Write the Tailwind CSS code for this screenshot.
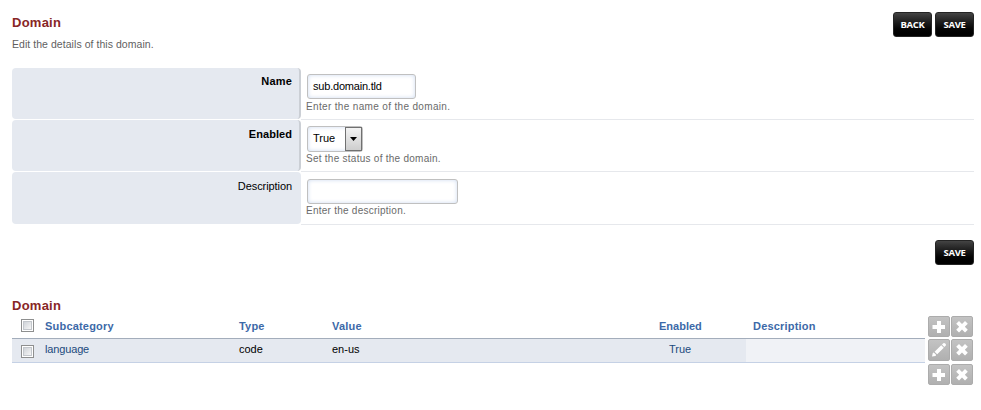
<!DOCTYPE html>
<html lang="en">
<head>
<meta charset="utf-8">
<title>Domain</title>
<script src="https://cdn.jsdelivr.net/npm/@tailwindcss/browser@4"></script>
</head>
<body class="bg-white text-black text-[11px] leading-[14px] font-['Liberation_Sans',Arial,sans-serif]">
<svg class="hidden">
  <symbol id="plus" viewBox="0 0 22 21"><path fill="#fff" d="M9 5h4v4h4v4h-4v4H9v-4H4.500V9H9z"/></symbol>
  <symbol id="cross" viewBox="0 0 22 21"><path fill="#fff" d="M8 5l3 3 3-3 2.800 2.800-3 3 3 3L14 16.600l-3-3-3 3-2.800-2.800 3-3-3-3z"/></symbol>
  <symbol id="pencil" viewBox="0 0 22 21"><path fill="#fff" d="M4 17.500l.8-3.600 1-.4 2.300 2.300-.5 1.100zM6.600 12.700l6.600-6.500 2.600 2.600-6.600 6.400zM14 5.500l1.300-1.200q1-.6 1.900.3l.5.500q.7 1-.1 1.700l-1.300 1.100z"/></symbol>
</svg>
<main class="w-[981px] h-[410px] pl-3 pr-[7px] pt-3 overflow-hidden">
  <header class="flex justify-between h-14">
    <div>
      <h1 class="mt-[3px] text-[13px] leading-4 font-bold tracking-[0.25px] text-[#882626]">Domain</h1>
      <p class="mt-[6px] text-[#5f5f5f] text-[10.500px] tracking-[0.05px]">Edit the details of this domain.</p>
    </div>
    <div class="flex gap-[3px]">
      <button class="w-[39px] h-[25px] rounded-[3px] border border-[#242424] bg-linear-to-b from-[#444] to-black text-white text-[9.500px] leading-3 font-bold tracking-[-0.3px] font-['Open_Sans',sans-serif]">BACK</button>
      <button class="w-[39px] h-[25px] rounded-[3px] border border-[#242424] bg-linear-to-b from-[#444] to-black text-white text-[9.500px] leading-3 font-bold tracking-[-0.3px] font-['Open_Sans',sans-serif]">SAVE</button>
    </div>
  </header>

  <form>
    <div class="flex h-[52px]">
      <label class="w-[289px] h-[51px] rounded-[4px] border-r-2 border-[#cbcfd5] bg-[#e5e9f0] pt-[6px] pr-[7px] text-right font-bold tracking-[0.2px]">Name</label>
      <div class="flex-1 border-b border-[#e6e8ec] pl-[5px] pt-[6px]">
        <div class="ml-px w-[109px] h-[25px] rounded-[3px] border border-[#c0c0c0] shadow-[inset_0_0_4px_#cddaf0] px-[5px] leading-[23px] text-[11px] tracking-[-0.2px]">sub.domain.tld</div>
        <p class="mt-px text-[#6a6a6a] text-[10px] tracking-[0.34px]">Enter the name of the domain.</p>
      </div>
    </div>
    <div class="flex h-[52px]">
      <label class="w-[289px] h-[51px] rounded-[4px] border-r-2 border-[#cbcfd5] bg-[#e5e9f0] pt-[7px] pr-[7px] text-right font-bold tracking-[0.05px]">Enabled</label>
      <div class="flex-1 border-b border-[#e6e8ec] pl-[5px] pt-[6px]">
        <div class="ml-px flex w-[56px] h-[26px] rounded-[3px] border border-[#c0c0c0] shadow-[inset_0_0_4px_#cddaf0] pl-[5px] leading-[23px] text-[11px]"><span class="w-8">True</span><span class="w-[17px] h-6 flex items-center justify-center border border-[#707070] bg-linear-to-b from-[#f3f3f3] to-[#cecece]"><svg class="w-[7px] h-1" viewBox="0 0 7 4"><path d="M0 0h7L3.500 4z"/></svg></span></div>
        <p class="text-[#6a6a6a] text-[10px] tracking-[0.26px]">Set the status of the domain.</p>
      </div>
    </div>
    <div class="flex h-[53px]">
      <label class="w-[289px] h-[52px] rounded-[4px] bg-[#e5e9f0] pt-[7px] pr-[9px] text-right tracking-[-0.08px]">Description</label>
      <div class="flex-1 border-b border-[#e6e8ec] pl-[5px] pt-[7px]">
        <div class="ml-px w-[151px] h-[25px] rounded-[3px] border border-[#c0c0c0] shadow-[inset_0_0_4px_#cddaf0]"></div>
        <p class="text-[#6a6a6a] text-[10px] tracking-[0.25px]">Enter the description.</p>
      </div>
    </div>
    <div class="flex justify-end pt-[15px] h-[73px]">
      <button class="w-[39px] h-[25px] rounded-[3px] border border-[#242424] bg-linear-to-b from-[#444] to-black text-white text-[9.500px] leading-3 font-bold tracking-[-0.3px] font-['Open_Sans',sans-serif]">SAVE</button>
    </div>
  </form>

  <h2 class="h-[18px] text-[13px] leading-4 font-bold tracking-[0.25px] text-[#882626]">Domain</h2>
  <div class="flex justify-between">
    <div class="w-[913px]">
      <div class="grid grid-cols-[33px_194px_93px_294px_120px_179px] h-[23px] border-b border-[#a3adbb] font-bold text-[#3c69a8] tracking-[0.2px] pt-[3px]">
        <span class="ml-[9px] size-[13px] border border-[#8e8f8f] bg-white p-px"><i class="block size-full border border-[#c3c7cc] bg-linear-to-br from-[#cfd3d8] to-[#f6f6f6]"></i></span>
        <span>Subcategory</span><span>Type</span><span>Value</span><span class="pl-[33px] tracking-normal">Enabled</span><span class="pl-[7px]">Description</span>
      </div>
      <div class="grid grid-cols-[33px_194px_93px_294px_120px_179px] h-6 border-b border-[#c5d1e5] bg-[#e5e9f0]">
        <span class="ml-[9px] mt-[6px] size-[13px] border border-[#8e8f8f] bg-white p-px"><i class="block size-full border border-[#c3c7cc] bg-linear-to-br from-[#cfd3d8] to-[#f6f6f6]"></i></span>
        <span class="pt-[3px] text-[#1c4a7d] tracking-[-0.15px]">language</span><span class="pt-[3px]">code</span><span class="pt-[3px]">en-us</span><span class="pt-[3px] pl-[43px] text-[#1c4a7d]">True</span><span class="bg-[#f0f2f6]"></span>
      </div>
    </div>
    <div class="grid grid-cols-[22px_22px] auto-rows-min gap-x-px mr-px">
      <svg class="w-[22px] h-[21px] mb-[2px] rounded-[2px] border border-[#acacac] bg-linear-to-b from-[#c3c3c3] to-[#b0b0b0]"><use href="#plus" x="-1" y="-1" width="22" height="21"/></svg>
      <svg class="w-[22px] h-[21px] mb-[2px] rounded-[2px] border border-[#acacac] bg-linear-to-b from-[#c3c3c3] to-[#b0b0b0]"><use href="#cross" x="-1" y="-1" width="22" height="21"/></svg>
      <svg class="w-[22px] h-[22px] mb-[3px] rounded-[2px] border border-[#acacac] bg-linear-to-b from-[#c3c3c3] to-[#b0b0b0]"><use href="#pencil" x="-1" y="-1" width="22" height="21"/></svg>
      <svg class="w-[22px] h-[22px] mb-[3px] rounded-[2px] border border-[#acacac] bg-linear-to-b from-[#c3c3c3] to-[#b0b0b0]"><use href="#cross" x="-1" y="-1" width="22" height="21"/></svg>
      <svg class="w-[22px] h-[21px] rounded-[2px] border border-[#acacac] bg-linear-to-b from-[#c3c3c3] to-[#b0b0b0]"><use href="#plus" x="-1" y="-1" width="22" height="21"/></svg>
      <svg class="w-[22px] h-[21px] rounded-[2px] border border-[#acacac] bg-linear-to-b from-[#c3c3c3] to-[#b0b0b0]"><use href="#cross" x="-1" y="-1" width="22" height="21"/></svg>
    </div>
  </div>
</main>
</body>
</html>
